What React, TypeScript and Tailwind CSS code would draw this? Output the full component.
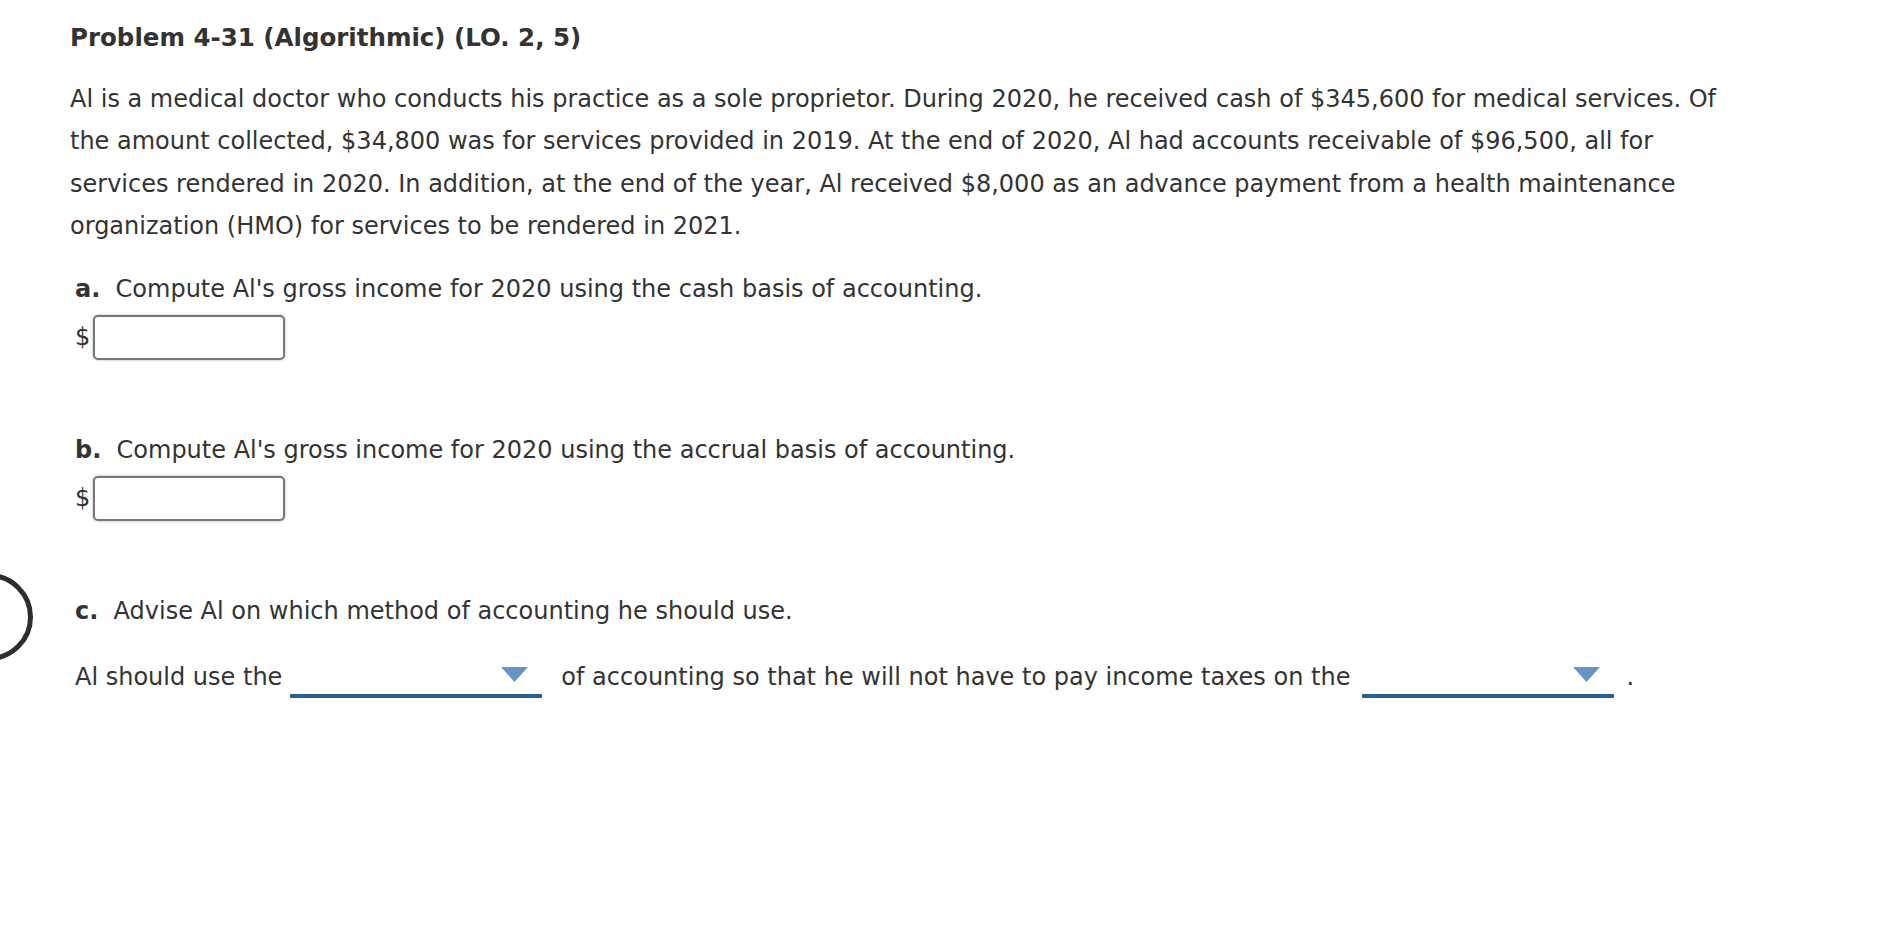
import React from "react";

function Dropdown() {
  return (
    <span className="relative flex h-[42px] w-[252px] shrink-0 items-center justify-end border-b-4 border-[#2c5f96] pr-[14px]">
      <svg width="27" height="15" viewBox="0 0 27 15" aria-hidden>
        <polygon points="0,0 27,0 13.5,15" fill="#6694c8" />
      </svg>
    </span>
  );
}

function MoneyInput() {
  return (
    <div className="mt-[5px] flex items-center">
      <span className="w-[18px] text-[24px] leading-none">$</span>
      <input
        type="text"
        className="h-[45px] w-[192px] rounded-[5px] border-2 border-[#777777] bg-white shadow-[0_0_3px_rgba(0,0,0,0.3)] outline-none"
      />
    </div>
  );
}

export default function App() {
  return (
    <div
      className="relative min-h-[928px] w-full overflow-hidden bg-white pl-[70px] pt-[21px] text-[#333333]"
      style={{ fontFamily: '"DejaVu Sans", Verdana, sans-serif' }}
    >
      <h1 className="text-[24.5px] font-bold leading-[34px]">
        Problem 4-31 (Algorithmic) (LO. 2, 5)
      </h1>

      <p className="mt-[23px] text-[24px] leading-[42.4px] whitespace-nowrap">
        Al is a medical doctor who conducts his practice as a sole proprietor.
        During 2020, he received cash of $345,600 for medical services. Of
        <br />
        the amount collected, $34,800 was for services provided in 2019. At the
        end of 2020, Al had accounts receivable of $96,500, all for
        <br />
        services rendered in 2020. In addition, at the end of the year, Al
        received $8,000 as an advance payment from a health maintenance
        <br />
        organization (HMO) for services to be rendered in 2021.
      </p>

      <div className="pl-[5px]">
        <p className="mt-[20px] text-[24px] leading-[42px]">
          <span className="font-bold">a.</span>&nbsp; Compute Al's gross income
          for 2020 using the cash basis of accounting.
        </p>
        <MoneyInput />

        <p className="mt-[69px] text-[24px] leading-[42px]">
          <span className="font-bold">b.</span>&nbsp; Compute Al's gross income
          for 2020 using the accrual basis of accounting.
        </p>
        <MoneyInput />

        <p className="mt-[69px] text-[24px] leading-[42px]">
          <span className="font-bold">c.</span>&nbsp; Advise Al on which method
          of accounting he should use.
        </p>

        <div className="mt-[24px] flex items-center text-[24px] leading-[42px]">
          <span className="whitespace-nowrap">Al should use the</span>
          <span className="ml-[8px] mr-[19px] flex">
            <Dropdown />
          </span>
          <span className="whitespace-nowrap">
            of accounting so that he will not have to pay income taxes on the
          </span>
          <span className="ml-[12px] mr-[12px] flex">
            <Dropdown />
          </span>
          <span>.</span>
        </div>
      </div>

      {/* partial circle mark at the left edge */}
      <div className="pointer-events-none absolute left-[-55px] top-[573px] h-[88px] w-[88px] rounded-full border-[5px] border-[#2e2e2e]" />
    </div>
  );
}
